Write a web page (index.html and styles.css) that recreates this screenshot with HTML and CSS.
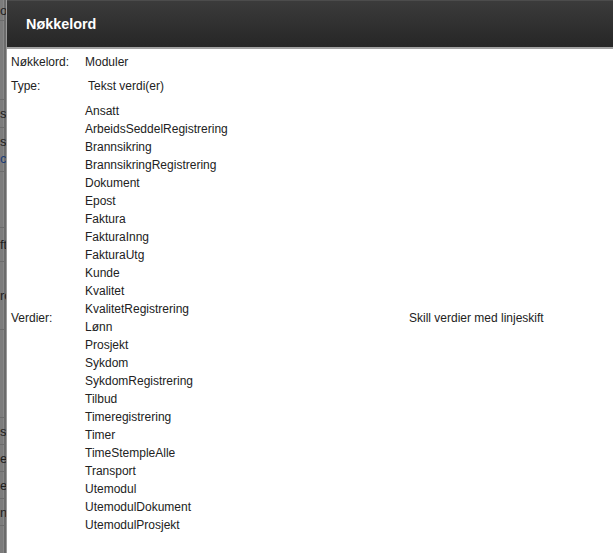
FILE: index.html
```html
<!DOCTYPE html>
<html lang="no">
<head>
<meta charset="utf-8">
<title>Nøkkelord</title>
<link rel="stylesheet" href="styles.css">
</head>
<body>
<div class="screen">
  <div class="backdrop" aria-hidden="true">
    <div class="brow r21"><span>or</span></div>
    <div class="brow r79"></div>
    <div class="brow r28"><span>s</span></div>
    <div class="brow r44"><span>s</span><span class="link">c</span></div>
    <div class="brow r56"></div>
    <div class="brow r34"><span>ft</span></div>
    <div class="brow r68"><span>rc</span></div>
    <div class="brow r88"></div>
    <div class="brow r27"><span>s</span></div>
    <div class="brow r27"><span>e</span></div>
    <div class="brow r27"><span>et</span></div>
    <div class="brow r27"><span>n</span></div>
  </div>
  <div class="dialog">
    <div class="dialog-header">
      <h1 class="dialog-title">Nøkkelord</h1>
    </div>
    <div class="dialog-body">
      <table class="kw-table">
        <tr>
          <td class="label">Nøkkelord:</td>
          <td class="value">Moduler</td>
          <td class="hint"></td>
        </tr>
        <tr>
          <td class="label">Type:</td>
          <td class="value"><span class="type-text">Tekst verdi(er)</span></td>
          <td class="hint"></td>
        </tr>
        <tr>
          <td class="label">Verdier:</td>
          <td class="value values">
            <div>Ansatt</div>
            <div>ArbeidsSeddelRegistrering</div>
            <div>Brannsikring</div>
            <div>BrannsikringRegistrering</div>
            <div>Dokument</div>
            <div>Epost</div>
            <div>Faktura</div>
            <div>FakturaInng</div>
            <div>FakturaUtg</div>
            <div>Kunde</div>
            <div>Kvalitet</div>
            <div>KvalitetRegistrering</div>
            <div>Lønn</div>
            <div>Prosjekt</div>
            <div>Sykdom</div>
            <div>SykdomRegistrering</div>
            <div>Tilbud</div>
            <div>Timeregistrering</div>
            <div>Timer</div>
            <div>TimeStempleAlle</div>
            <div>Transport</div>
            <div>Utemodul</div>
            <div>UtemodulDokument</div>
            <div>UtemodulProsjekt</div>
          </td>
          <td class="hint">Skill verdier med linjeskift</td>
        </tr>
      </table>
    </div>
  </div>
</div>
</body>
</html>
```

FILE: styles.css
```css
html, body {
  margin: 0;
  padding: 0;
  height: 100%;
  overflow: hidden;
}

body {
  font-family: "Liberation Sans", Arial, sans-serif;
  font-size: 12px;
  color: #222;
  background: #7a7a7a;
}

.screen {
  display: flex;
  height: 553px;
  width: 613px;
  overflow: hidden;
}

.backdrop {
  width: 6px;
  flex: 0 0 6px;
  overflow: hidden;
  background: linear-gradient(to right, #7c7c7c 0 3px, #888 3px 4px, #6b6b6b 4px 6px);
  display: flex;
  flex-direction: column;
  color: #1e1e1e;
  font-size: 13px;
}

.brow {
  box-sizing: border-box;
  border-bottom: 1px solid #6c6c6c;
  display: flex;
  flex-direction: column;
  justify-content: center;
  white-space: nowrap;
  line-height: 17px;
  flex: 0 0 auto;
}

.brow span { display: block; }
.brow .link { color: #1c3d78; }

.r21 { height: 21px; }
.r27 { height: 27px; }
.r28 { height: 28px; }
.r34 { height: 34px; }
.r44 { height: 44px; }
.r56 { height: 56px; }
.r68 { height: 68px; }
.r79 { height: 79px; }
.r88 { height: 88px; }

.dialog {
  flex: 1 0 auto;
  min-width: 620px;
  display: flex;
  flex-direction: column;
  border-left: 1px solid #9a9a9a;
  background: #fff;
}

.dialog-header {
  height: 46px;
  border-top: 1px solid #4c4c4c;
  border-bottom: 2px solid #a2a2a2;
  background: linear-gradient(to bottom, #3b3b3b, #262626);
  display: flex;
  align-items: center;
  padding-left: 19px;
}

.dialog-title {
  margin: 0;
  color: #fff;
  font-size: 14.4px;
  font-weight: bold;
  line-height: 18px;
}

.dialog-body {
  flex: 1;
  background: #fff;
}

.kw-table {
  border-collapse: separate;
  border-spacing: 2px;
}

.kw-table td {
  padding: 2px;
  line-height: 18px;
  vertical-align: middle;
  white-space: nowrap;
}

.kw-table .label { width: 68px; }
.kw-table .value { width: 318px; }

.type-text { margin-left: 3px; }

.kw-table .values { padding-top: 3px; }
```
